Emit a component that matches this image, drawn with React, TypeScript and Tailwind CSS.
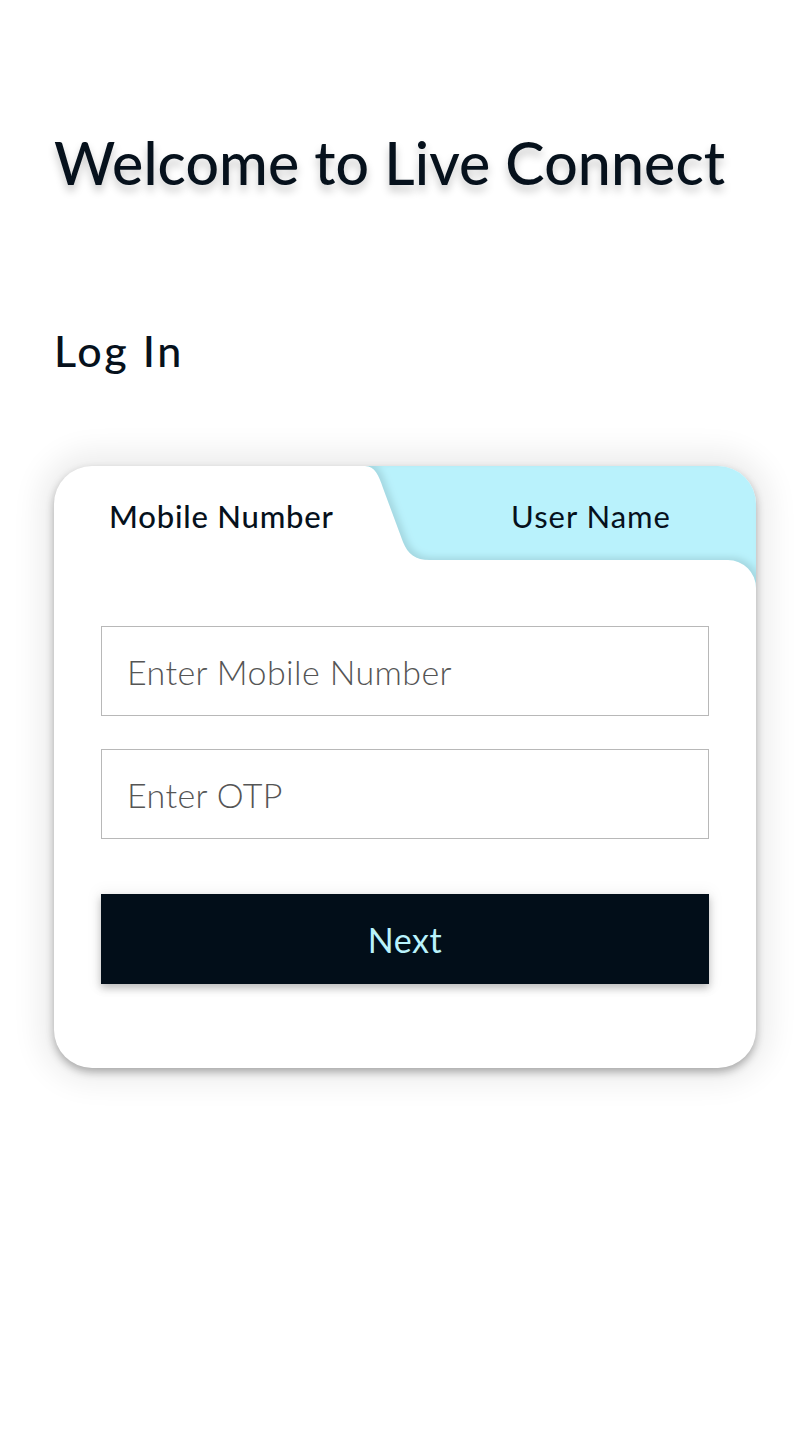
import React from "react";

export default function App() {
  return (
    <div
      className="min-h-[1440px] w-full bg-white px-[54px]"
      style={{ fontFamily: "Lato, 'Noto Sans', sans-serif" }}
    >
      <h1 className="pt-[128px] text-[59px] font-medium leading-[70px] tracking-[0.1px] text-[#06111c] [text-shadow:0_6px_8px_rgba(0,0,0,0.22)]">
        Welcome to Live Connect
      </h1>
      <h2 className="mt-[129px] text-[43px] font-medium leading-[48px] tracking-[2.6px] text-[#06111c]">
        Log In
      </h2>

      <div className="relative mt-[91px] overflow-hidden rounded-[38px] bg-white shadow-[0_4px_8px_rgba(0,0,0,0.3),0_0_30px_14px_rgba(0,0,0,0.075)]">
        <svg
          className="absolute right-0 top-0"
          width="391"
          height="130"
          viewBox="0 0 391 130"
        >
          <defs>
            <filter id="inner" x="-10%" y="-20%" width="120%" height="140%">
              <feComponentTransfer in="SourceAlpha">
                <feFuncA type="table" tableValues="1 0" />
              </feComponentTransfer>
              <feGaussianBlur stdDeviation="3" />
              <feOffset dx="4" dy="-3" result="off" />
              <feFlood floodColor="#000" floodOpacity="0.22" />
              <feComposite in2="off" operator="in" />
              <feComposite in2="SourceAlpha" operator="in" result="sh" />
              <feMerge>
                <feMergeNode in="SourceGraphic" />
                <feMergeNode in="sh" />
              </feMerge>
            </filter>
          </defs>
          <path
            d="M0 0 H391 V122 A28 28 0 0 0 363 94 H65 C50 94 43 88 38 76 L18 22 C14 10 10 0 0 0 Z"
            fill="#b9f2fc"
            filter="url(#inner)"
          />
        </svg>

        <div className="relative z-10 flex h-[94px] items-center pt-[6px]">
          <span className="pl-[55px] text-[31px] font-medium tracking-[0.8px] text-[#06111c]">
            Mobile Number
          </span>
          <span className="ml-auto mr-[85px] text-[31px] tracking-[1px] text-[#06111c]">
            User Name
          </span>
        </div>

        <div className="relative z-10 flex flex-col px-[47px] pb-[84px] pt-[66px]">
          <input
            className="h-[90px] w-full border border-[#b8b8b8] bg-white pl-[25px] text-[34px] font-light tracking-[0.4px] text-[#333] outline-none placeholder:text-[#555]"
            placeholder="Enter Mobile Number"
          />
          <input
            className="mt-[33px] h-[90px] w-full border border-[#b8b8b8] bg-white pl-[25px] text-[34px] font-light tracking-[0.4px] text-[#333] outline-none placeholder:text-[#555]"
            placeholder="Enter OTP"
          />
          <button className="mt-[55px] flex h-[90px] w-full items-center justify-center bg-[#020e19] text-[34px] tracking-[0.5px] text-[#b9f2fc] shadow-[0_4px_8px_rgba(0,0,0,0.25),0_0_14px_4px_rgba(0,0,0,0.04)]">
            Next
          </button>
        </div>
      </div>
    </div>
  );
}
